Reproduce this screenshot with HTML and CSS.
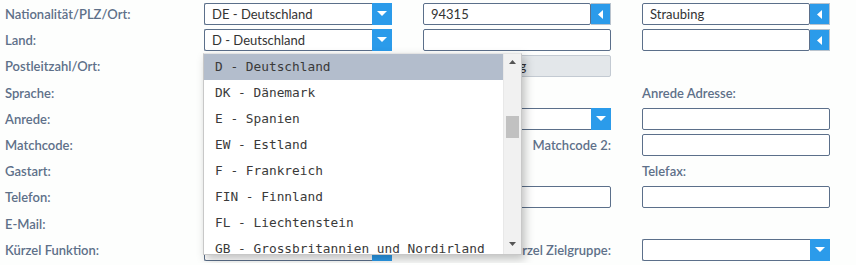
FILE: index.html
```html
<!DOCTYPE html>
<html lang="de">
<head>
  <meta charset="UTF-8">
  <title>Adresse</title>
  <link rel="stylesheet" href="styles.css">
</head>
<body>
  <form class="form">
    <label class="lbl">Nationalität/PLZ/Ort:</label>
    <div class="combo"><span class="val">DE - Deutschland</span><span class="btn"><svg width="10" height="6" viewBox="0 0 10 6"><path d="M0 0h10L5 5z" fill="#fff"/></svg></span></div>
    <div class="lookup"><input type="text" value="94315"><span class="btn small"><svg width="5" height="9" viewBox="0 0 5 9"><path d="M5 0v9L0 4.5z" fill="#fff"/></svg></span></div>
    <div class="lookup"><input type="text" value="Straubing"><span class="btn small"><svg width="5" height="9" viewBox="0 0 5 9"><path d="M5 0v9L0 4.5z" fill="#fff"/></svg></span></div>

    <label class="lbl">Land:</label>
    <div class="combo"><span class="val">D - Deutschland</span><span class="btn"><svg width="10" height="6" viewBox="0 0 10 6"><path d="M0 0h10L5 5z" fill="#fff"/></svg></span></div>
    <input type="text" class="txt">
    <div class="lookup"><input type="text"><span class="btn small"><svg width="5" height="9" viewBox="0 0 5 9"><path d="M5 0v9L0 4.5z" fill="#fff"/></svg></span></div>

    <label class="lbl">Postleitzahl/Ort:</label>
    <input type="text" class="txt">
    <input type="text" class="txt readonly" value="94315 Straubing" readonly>
    <span></span>

    <label class="lbl">Sprache:</label>
    <div class="combo"><span class="val"></span><span class="btn"><svg width="10" height="6" viewBox="0 0 10 6"><path d="M0 0h10L5 5z" fill="#fff"/></svg></span></div>
    <span></span>
    <label class="lbl">Anrede Adresse:</label>

    <label class="lbl">Anrede:</label>
    <div class="combo wide"><span class="val"></span><span class="btn"><svg width="10" height="6" viewBox="0 0 10 6"><path d="M0 0h10L5 5z" fill="#fff"/></svg></span></div>
    <input type="text" class="txt">

    <label class="lbl">Matchcode:</label>
    <input type="text" class="txt">
    <label class="lbl right">Matchcode 2:</label>
    <input type="text" class="txt">

    <label class="lbl">Gastart:</label>
    <div class="combo"><span class="val"></span><span class="btn"><svg width="10" height="6" viewBox="0 0 10 6"><path d="M0 0h10L5 5z" fill="#fff"/></svg></span></div>
    <span></span>
    <label class="lbl">Telefax:</label>

    <label class="lbl">Telefon:</label>
    <input type="text" class="txt wide">
    <input type="text" class="txt">

    <label class="lbl">E-Mail:</label>
    <input type="text" class="txt">
    <span></span>
    <span></span>

    <label class="lbl">Kürzel Funktion:</label>
    <div class="combo"><span class="val"></span><span class="btn"><svg width="10" height="6" viewBox="0 0 10 6"><path d="M0 0h10L5 5z" fill="#fff"/></svg></span></div>
    <label class="lbl right">Kürzel Zielgruppe:</label>
    <div class="combo"><span class="val"></span><span class="btn"><svg width="10" height="6" viewBox="0 0 10 6"><path d="M0 0h10L5 5z" fill="#fff"/></svg></span></div>

    <!-- offene Auswahlliste für "Land" -->
    <div class="dropdown">
      <ul class="options">
        <li class="active">D - Deutschland</li>
        <li>DK - Dänemark</li>
        <li>E - Spanien</li>
        <li>EW - Estland</li>
        <li>F - Frankreich</li>
        <li>FIN - Finnland</li>
        <li>FL - Liechtenstein</li>
        <li>GB - Grossbritannien und Nordirland</li>
      </ul>
      <div class="scrollbar">
        <svg class="arrow" width="7" height="4" viewBox="0 0 7 4"><path d="M0 4h7L3.5 0z" fill="#555"/></svg>
        <div class="thumb"></div>
        <svg class="arrow down" width="7" height="4" viewBox="0 0 7 4"><path d="M0 0h7L3.5 4z" fill="#555"/></svg>
      </div>
    </div>
  </form>
</body>
</html>
```

FILE: styles.css
```css
body {
  margin: 0;
  background: #fdfefd;
  font-family: Lato, "Open Sans", Arial, sans-serif;
  font-size: 13px;
  color: #333;
}
.form {
  position: relative;
  display: grid;
  grid-template-columns: 168px 188px 188px 188px;
  grid-auto-rows: 26.2px;
  column-gap: 31px;
  align-items: center;
  padding: 1px 0 0 5px;
}
.lbl {
  font-weight: 600;
  color: #5e7089;
  white-space: nowrap;
}
.lbl.right {
  text-align: right;
}
.txt, .lookup input, .combo {
  box-sizing: border-box;
  height: 22px;
  border: 1px solid #5b6f8a;
  border-radius: 2px;
  background: #fff;
  font-family: inherit;
  font-size: 13px;
  color: #333;
}
.txt {
  width: 100%;
  padding: 0 7px;
}
.txt.readonly {
  background: #e3e7ea;
  border-color: #c3cad2;
}
.wide {
  grid-column: span 2;
}
.combo {
  display: flex;
  align-items: stretch;
  padding: 0;
  border-right: none;
}
.combo .val {
  flex: 1;
  padding-left: 7px;
  line-height: 20px;
}
.btn {
  display: flex;
  align-items: center;
  justify-content: center;
  width: 20px;
  margin: -1px 0;
  background: #2b9bea;
}
.lookup {
  display: flex;
  height: 22px;
}
.lookup input {
  flex: 1;
  min-width: 0;
  padding: 0 7px;
}
.btn.small {
  margin: 0;
  box-sizing: border-box;
  border: 1px solid #b9c3cd;
  border-left: none;
}
.dropdown {
  position: absolute;
  left: 203px;
  top: 53px;
  width: 317px;
  height: 200px;
  display: flex;
  background: #fff;
  border: 1px solid #c8c8c8;
  border-top-color: #e4e4e4;
  box-shadow: 3px 4px 9px rgba(0, 0, 0, 0.25);
  overflow: hidden;
}
.options {
  flex: 1;
  margin: 0;
  padding: 0;
  list-style: none;
  font-family: "DejaVu Sans Mono", "Liberation Mono", monospace;
  font-size: 12.8px;
  color: #3a3a3a;
}
.options li {
  height: 26px;
  line-height: 25px;
  padding-left: 11px;
  white-space: nowrap;
}
.options li.active {
  background: #b3bdcc;
}
.scrollbar {
  position: relative;
  width: 17px;
  background: #f1f1f1;
  border-left: 1px solid #e8e8e8;
}
.scrollbar .arrow {
  position: absolute;
  left: 5px;
  top: 6px;
}
.scrollbar .arrow.down {
  top: auto;
  bottom: 8px;
}
.thumb {
  position: absolute;
  left: 2px;
  right: 2px;
  top: 62px;
  height: 22px;
  background: #c1c1c1;
}
```
